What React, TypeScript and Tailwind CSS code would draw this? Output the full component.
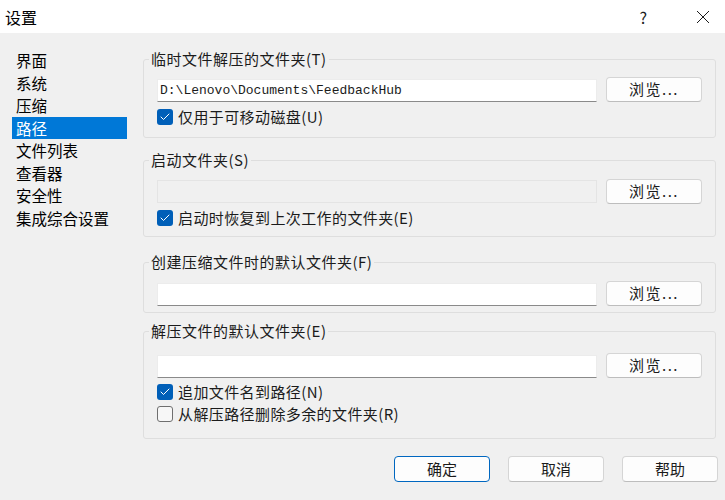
import { Check } from "lucide-react";

const navItems = ["界面", "系统", "压缩", "路径", "文件列表", "查看器", "安全性", "集成综合设置"];

function Browse() {
  return (
    <button
      type="button"
      className="h-[25px] w-[96px] shrink-0 rounded-[4px] border border-[#d5d5d5] border-b-[#bdbdbd] bg-[#fdfdfd] text-[15px] tracking-[1.5px] text-[#1b1b1b]"
    >
      浏览...
    </button>
  );
}

function PathInput({ value, disabled }: { value?: string; disabled?: boolean }) {
  return (
    <div
      className={`flex h-[23px] flex-1 items-center px-[2px] text-[13px] text-[#1b1b1b] ${
        disabled
          ? "border border-[#e4e4e4] bg-[#f0f0f0]"
          : "border border-[#ececec] border-b-[#8a8a8a] bg-white"
      }`}
      style={{ fontFamily: '"Liberation Mono", monospace' }}
    >
      {value}
    </div>
  );
}

function CheckRow({ label, checked }: { label: string; checked: boolean }) {
  return (
    <div className="flex h-[20px] items-center gap-[5px] text-[15px] tracking-[0.4px] text-[#1b1b1b]">
      {checked ? (
        <span className="flex size-[16px] items-center justify-center rounded-[3px] bg-[#005fb8] text-white">
          <Check size={12} strokeWidth={2} aria-hidden="true" />
        </span>
      ) : (
        <span className="size-[16px] rounded-[3px] border border-[#6f6f6f] bg-[#f7f7f7]" />
      )}
      <span>{label}</span>
    </div>
  );
}

function Group({
  title,
  className,
  children,
}: {
  title: string;
  className: string;
  children: React.ReactNode;
}) {
  return (
    <fieldset className={`rounded-[3px] border border-[#dedede] px-[13px] ${className}`}>
      <legend className="ml-[-8px] px-[2px] text-[15px] leading-[20px] tracking-[0.5px] text-[#1b1b1b]">
        {title}
      </legend>
      {children}
    </fieldset>
  );
}

export default function App() {
  return (
    <div
      className="flex h-[500px] w-[725px] flex-col overflow-hidden bg-[#f0f0f0]"
      style={{ fontFamily: '"Noto Sans CJK SC", "Noto Sans", sans-serif' }}
    >
      <div className="flex h-[33px] shrink-0 items-center bg-white">
        <span className="ml-[5px] text-[16px] text-black">设置</span>
        <span className="ml-auto mr-[49px] text-[16px] text-[#1b1b1b]">?</span>
        <svg width="14" height="14" viewBox="0 0 14 14" className="mr-[15px]" aria-hidden="true">
          <path d="M1 1L13 13M13 1L1 13" stroke="#1b1b1b" strokeWidth="1" />
        </svg>
      </div>

      <div className="flex flex-1">
        <ul className="ml-[12px] mt-[16px] w-[115px] shrink-0">
          {navItems.map((item) => (
            <li
              key={item}
              className={`h-[22.5px] pl-[4px] text-[15.5px] leading-[22.5px] ${
                item === "路径" ? "bg-[#0078d7] text-white" : "text-black"
              }`}
            >
              {item}
            </li>
          ))}
        </ul>

        <div className="ml-[16px] mt-[16px] flex w-[573px] flex-col">
          <Group title="临时文件解压的文件夹(T)" className="pb-[10px]">
            <div className="mt-[8px] flex items-end gap-[9px]">
              <PathInput value="D:\Lenovo\Documents\FeedbackHub" />
              <Browse />
            </div>
            <div className="mt-[5px]">
              <CheckRow label="仅用于可移动磁盘(U)" checked />
            </div>
          </Group>

          <Group title="启动文件夹(S)" className="mt-[12px] pb-[8px]">
            <div className="mt-[9px] flex items-center gap-[9px]">
              <PathInput disabled />
              <Browse />
            </div>
            <div className="mt-[4px]">
              <CheckRow label="启动时恢复到上次工作的文件夹(E)" checked />
            </div>
          </Group>

          <Group title="创建压缩文件时的默认文件夹(F)" className="mt-[15px] pb-[6px]">
            <div className="mt-[9px] flex items-end gap-[9px]">
              <PathInput />
              <Browse />
            </div>
          </Group>

          <Group title="解压文件的默认文件夹(E)" className="mt-[8px] pb-[14px]">
            <div className="mt-[12px] flex items-end gap-[9px]">
              <PathInput />
              <Browse />
            </div>
            <div className="mt-[4px] flex flex-col gap-[2px]">
              <CheckRow label="追加文件名到路径(N)" checked />
              <CheckRow label="从解压路径删除多余的文件夹(R)" checked={false} />
            </div>
          </Group>
        </div>
      </div>

      <div className="mb-[18px] flex justify-end gap-[18px] pr-[7px]">
        <button
          type="button"
          className="h-[26px] w-[96px] rounded-[4px] border border-[#0067c0] bg-[#fdfdfd] text-[15px] text-[#1b1b1b]"
        >
          确定
        </button>
        <button
          type="button"
          className="h-[26px] w-[96px] rounded-[4px] border border-[#d5d5d5] border-b-[#bdbdbd] bg-[#fdfdfd] text-[15px] text-[#1b1b1b]"
        >
          取消
        </button>
        <button
          type="button"
          className="h-[26px] w-[96px] rounded-[4px] border border-[#d5d5d5] border-b-[#bdbdbd] bg-[#fdfdfd] text-[15px] text-[#1b1b1b]"
        >
          帮助
        </button>
      </div>
    </div>
  );
}
